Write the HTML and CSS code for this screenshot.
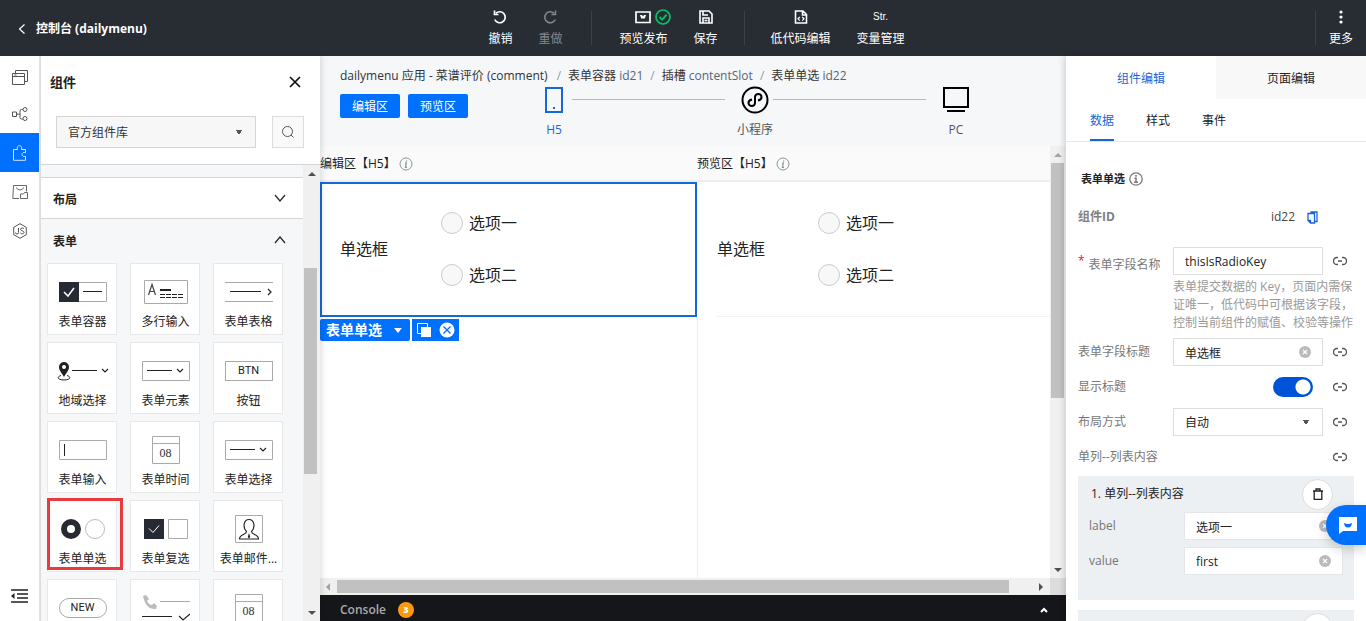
FILE: index.html
```html
<!DOCTYPE html>
<html lang="zh-CN">
<head>
<meta charset="utf-8">
<title>控制台 (dailymenu)</title>
<link rel="stylesheet" href="styles.css">
</head>
<body>
<svg class="defs" width="0" height="0" aria-hidden="true">
  <symbol id="link" viewBox="0 0 14 10"><path d="M5 1.500H4a3.500 3.500 0 0 0 0 7h1M9 1.500h1a3.500 3.500 0 0 1 0 7H9M5 5h4" fill="none" stroke="#555" stroke-width="1.300"/></symbol>
  <symbol id="clear" viewBox="0 0 12 12"><circle cx="6" cy="6" r="6" fill="#bbb"/><path d="M4 4l4 4M8 4L4 8" stroke="#fff" stroke-width="1.200"/></symbol>
  <symbol id="info" viewBox="0 0 14 14"><circle cx="7" cy="7" r="6" fill="none" stroke="currentColor"/><path d="M7.600 3.400v1.300M6 6.200h1.300L6.500 10.300H8" fill="none" stroke="currentColor" stroke-width="1.200"/></symbol>
  <symbol id="date" viewBox="0 0 28 28"><path d="M.5.500h27v27H.500zM.5 7.500h27" fill="#fff" stroke="#aaa"/></symbol>
  <symbol id="trash" viewBox="0 0 12 12"><path d="M1 3h10M4 3V1h4v2M2.200 3v8.300h7.600V3" fill="none" stroke="#222" stroke-width="1.300"/></symbol>
</svg>

<header class="topbar">
  <a class="brand" href="#"><svg width="8" height="12" viewBox="0 0 8 12"><path d="M6.500 1.500L1.500 6l5 4.500" fill="none" stroke="#fff" stroke-width="1.200"/></svg>控制台 (dailymenu)</a>
  <nav class="tools">
    <button class="tool"><span class="tool-icon"><svg width="16" height="16" viewBox="0 0 16 16"><path d="M4 4.200a5.500 5.500 0 1 1-1.300 6.300M2.500 1.500v4h4" fill="none" stroke="#fff" stroke-width="1.700"/></svg></span>撤销</button>
    <button class="tool disabled"><span class="tool-icon"><svg width="16" height="16" viewBox="0 0 16 16"><path d="M12 4.200a5.500 5.500 0 1 0 1.300 6.300M13.500 1.500v4h-4" fill="none" stroke="#85888c" stroke-width="1.500"/></svg></span>重做</button>
    <i class="divider first"></i>
    <button class="tool"><span class="tool-icon"><svg width="16" height="14" viewBox="0 0 16 14"><path d="M1 2h14v10.500H1z" fill="none" stroke="#fff" stroke-width="1.700"/><path d="M5 5h2l1 1.500L9 5h2L9.800 8.500H6.200z" fill="#fff"/></svg><svg class="badge" width="16" height="16" viewBox="0 0 16 16"><circle cx="8" cy="8" r="7" fill="none" stroke="#0abf6a" stroke-width="1.700"/><path d="M4.500 8l2.600 2.600L11.600 5.800" fill="none" stroke="#0abf6a" stroke-width="2"/></svg></span>预览发布</button>
    <button class="tool"><span class="tool-icon"><svg width="14" height="14" viewBox="0 0 14 14"><path d="M1 1h9l3 3v9H1zM4 13V8h6v5M4 1v4h5M5.500 10.500h3" fill="none" stroke="#fff" stroke-width="1.600"/></svg></span>保存</button>
    <i class="divider"></i>
    <button class="tool"><span class="tool-icon"><svg width="14" height="14" viewBox="0 0 14 14"><path d="M1.500 1h7.500l3.500 3.500V13h-11zM8.500 1v4h4" fill="none" stroke="#fff" stroke-width="1.600"/><path d="M5.800 7L4 8.800l1.800 1.800M8.200 7L10 8.800l-1.800 1.800" fill="none" stroke="#fff" stroke-width="1.200"/></svg></span>低代码编辑</button>
    <button class="tool"><span class="tool-icon str">Str.</span>变量管理</button>
  </nav>
  <div class="more"><i class="divider"></i><button class="tool"><span class="tool-icon"><svg width="4" height="14" viewBox="0 0 4 14"><circle cx="2" cy="2" r="1.600" fill="#fff"/><circle cx="2" cy="7" r="1.600" fill="#fff"/><circle cx="2" cy="12" r="1.600" fill="#fff"/></svg></span>更多</button></div>
</header>

<div class="workspace">
  <nav class="rail">
    <button class="rail-item" aria-label="页面"><svg width="16" height="16" viewBox="0 0 16 16"><path d="M.5 4.500h12v11H.500zM.5 7.500h12M3.500 4.500v-3h12v11h-3M2.500 6h2" fill="none" stroke="#555"/></svg></button>
    <button class="rail-item" aria-label="流程"><svg width="16" height="16" viewBox="0 0 16 16"><path d="M.5 6h4v4.500h-4zM4.500 8.200H8M11 3.500H9.500Q8 3.500 8 5v6.500Q8 13 9.500 13H11" fill="none" stroke="#555"/><circle cx="13" cy="3.500" r="2" fill="none" stroke="#555"/><circle cx="13" cy="12.500" r="2" fill="none" stroke="#555"/></svg></button>
    <button class="rail-item active" aria-label="组件"><svg width="16" height="16" viewBox="0 0 16 16"><path d="M1.500 4.500h4C4.500 2 6 .7 7.500.7S10.500 2 9.500 4.500h4v3.200c-2-.8-3.500.3-3.500 1.800s1.500 2.600 3.500 1.800v4h-12z" fill="none" stroke="#d4e7ff"/></svg></button>
    <button class="rail-item" aria-label="素材"><svg width="16" height="16" viewBox="0 0 16 16"><path d="M7 14.500H.8L1.500 1.500h13v6M4 3.500q4 5 8 0M8.500 10h3l1-1.500h3v6h-7z" fill="none" stroke="#666"/></svg></button>
    <button class="rail-item" aria-label="脚本"><svg width="16" height="16" viewBox="0 0 16 16"><path d="M8 .7l6.300 3.600v7.400L8 15.300l-6.300-3.600V4.300z" fill="none" stroke="#555"/><path d="M6.500 5v4.500q0 1.500-1.500 1.500t-1.500-1.500M12 6q-.5-1-1.800-1T8.500 6.300c0 2 3.500 1 3.500 3 0 1-.6 1.500-1.800 1.500s-1.700-.5-1.900-1.200" fill="none" stroke="#555"/></svg></button>
    <button class="rail-item bottom" aria-label="收起"><svg width="17" height="14" viewBox="0 0 17 14"><path d="M0 1h17M6 5h11M6 9h11M0 13h17" stroke="#222" stroke-width="1.500"/><path d="M3.500 4v6L0 7z" fill="#222"/></svg></button>
  </nav>

  <aside class="library">
    <div class="library-head"><h2>组件</h2><button class="plain" aria-label="关闭"><svg width="12" height="12" viewBox="0 0 12 12"><path d="M1 1l10 10M11 1L1 11" stroke="#111" stroke-width="1.700"/></svg></button></div>
    <div class="library-search">
      <select class="lib-select" aria-label="组件库"><option>官方组件库</option></select>
      <button class="search" aria-label="搜索"><svg width="14" height="14" viewBox="0 0 14 14"><circle cx="6.500" cy="6.500" r="5" fill="none" stroke="#555"/><path d="M10 10l2.500 2.500" stroke="#555"/></svg></button>
    </div>
    <div class="library-body">
      <div class="sections">
        <button class="section closed">布局<svg width="12" height="8" viewBox="0 0 12 8"><path d="M1 1l5 6 5-6" fill="none" stroke="#222" stroke-width="1.200"/></svg></button>
        <button class="section">表单<svg width="12" height="8" viewBox="0 0 12 8"><path d="M1 7l5-6 5 6" fill="none" stroke="#222" stroke-width="1.200"/></svg></button>
        <div class="cards">
          <button class="card"><span class="pic"><svg width="48" height="20" viewBox="0 0 48 20"><path d="M.5.500h47v19H.500z" fill="#fff" stroke="#aaa"/><path d="M0 0h20v20H0z" fill="#262b33"/><path d="M5 10l4 4 6-8" fill="none" stroke="#fff" stroke-width="1.500"/><path d="M24 9.500h19" stroke="#222"/></svg></span>表单容器</button>
          <button class="card"><span class="pic"><svg width="44" height="24" viewBox="0 0 44 24"><path d="M.5.500h43v23H.500z" fill="#fff" stroke="#aaa"/><path d="M4.500 15L8 4.500 11.500 15M5.500 11.500h5" fill="none" stroke="#444" stroke-width="1.200"/><path d="M16 10h11" stroke="#222" stroke-width="2"/><path d="M16 14.500h23" stroke="#222" stroke-dasharray="5 1"/><path d="M16 17.500h23" stroke="#222" stroke-dasharray="5 1"/></svg></span>多行输入</button>
          <button class="card"><span class="pic"><svg width="48" height="20" viewBox="0 0 48 20"><path d="M0 .5h48M0 19.500h48" stroke="#aaa"/><path d="M5 9.500h31" stroke="#222"/><path d="M43 7l3 3-3 3" fill="none" stroke="#222" stroke-width="1.200"/></svg></span>表单表格</button>
          <button class="card"><span class="pic"><svg width="52" height="20" viewBox="0 0 52 20"><path d="M7 16C4 11 2 9 2 6a5 5 0 0 1 10 0c0 3-2 5-5 10z" fill="#222"/><circle cx="7" cy="6" r="2" fill="#fff"/><path d="M4 14.500c-5 1.500-3 4.500 3 4.500s8-3 3-4.500" fill="none" stroke="#222"/><path d="M15 9.500h25" stroke="#222"/><path d="M45 8l3 3 3-3" fill="none" stroke="#222" stroke-width="1.200"/></svg></span>地域选择</button>
          <button class="card"><span class="pic"><svg width="48" height="20" viewBox="0 0 48 20"><path d="M.5.500h47v19H.500z" fill="#fff" stroke="#aaa"/><path d="M5 9.500h25" stroke="#222"/><path d="M35 8l3 3 3-3" fill="none" stroke="#222" stroke-width="1.200"/></svg></span>表单元素</button>
          <button class="card"><span class="pic"><span class="btn-pic">BTN</span></span>按钮</button>
          <button class="card"><span class="pic"><svg width="48" height="20" viewBox="0 0 48 20"><path d="M.5.500h47v19H.500z" fill="#fff" stroke="#aaa"/><path d="M5.500 4v12" stroke="#222"/></svg></span>表单输入</button>
          <button class="card"><span class="pic"><span class="date-pic"><svg width="28" height="28"><use href="#date"/></svg><span>08</span></span></span>表单时间</button>
          <button class="card"><span class="pic"><svg width="48" height="20" viewBox="0 0 48 20"><path d="M.5.500h47v19H.500z" fill="#fff" stroke="#aaa"/><path d="M5 9.500h25" stroke="#222"/><path d="M35 8l3 3 3-3" fill="none" stroke="#222" stroke-width="1.200"/></svg></span>表单选择</button>
          <button class="card marked"><span class="pic"><svg width="44" height="20" viewBox="0 0 44 20"><circle cx="10" cy="10" r="7" fill="#fff" stroke="#262b33" stroke-width="6"/><circle cx="34" cy="10" r="9.500" fill="#fff" stroke="#bbb"/></svg></span>表单单选</button>
          <button class="card"><span class="pic"><svg width="44" height="20" viewBox="0 0 44 20"><path d="M0 0h20v20H0z" fill="#262b33"/><path d="M5 9.500l4 4 6-7" fill="none" stroke="#fff"/><path d="M24.500.500h19v19h-19z" fill="#fff" stroke="#aaa"/></svg></span>表单复选</button>
          <button class="card"><span class="pic"><svg width="28" height="28" viewBox="0 0 28 28"><path d="M.5.500h27v27H.500z" fill="#fff" stroke="#aaa"/><path d="M4.500 24c0-5 7-4 7-7.500-4-4-3-12 2.500-12s6.500 8 2.500 12c0 3.500 7 2.500 7 7.500z" fill="none" stroke="#222" stroke-width="1.200"/><path d="M14 18l1.200 4-1.200 1.500-1.200-1.500z" fill="#222"/></svg></span>表单邮件...</button>
          <button class="card"><span class="pic"><span class="btn-pic pill">NEW</span></span></button>
          <button class="card"><span class="pic"><svg width="48" height="26" viewBox="0 0 48 26"><path d="M1 1l3-1 3 4-2 2q2 4 5 4l2-2 3 3-1 3Q4 15 1 1z" fill="#bbb"/><path d="M18 6.500h30" stroke="#aaa"/><path d="M0 21.500h30" stroke="#222"/><path d="M37 21l4 4 7-6" fill="none" stroke="#222" stroke-width="1.200"/></svg></span></button>
          <button class="card"><span class="pic"><span class="date-pic"><svg width="28" height="28"><use href="#date"/></svg><span>08</span></span></span></button>
        </div>
      </div>
      <div class="vbar lib-bar"><i class="arrow up"></i><div class="track"><i class="thumb"></i></div><i class="arrow down"></i></div>
    </div>
  </aside>

  <main class="stage">
    <div class="stage-head">
      <nav class="crumbs"><span>dailymenu 应用 - 菜谱评价 (comment)</span><i>/</i><span>表单容器 <em>id21</em></span><i>/</i><span>插槽 <em>contentSlot</em></span><i>/</i><span>表单单选 <em>id22</em></span></nav>
      <div class="platforms">
        <button class="primary">编辑区</button><button class="primary">预览区</button>
        <div class="steps">
          <button class="step current"><span class="step-icon"><svg width="18" height="26" viewBox="0 0 18 26"><path d="M1 1h16v24H1z" fill="none" stroke="#1766d9" stroke-width="2"/><path d="M8 20h2v2H8z" fill="#1766d9"/></svg></span>H5</button>
          <i class="line"></i>
          <button class="step"><span class="step-icon"><svg width="28" height="28" viewBox="0 0 28 28"><circle cx="14" cy="14" r="12.500" fill="none" stroke="#000" stroke-width="2"/><path d="M17 14.500c2.500-.5 3.500-1.700 3.500-3.500 0-1.700-1.500-3-3.200-3S14 9.300 14 11v6c0 1.700-1.500 3-3.200 3s-3.300-1.300-3.300-3c0-1.800 1-3 3.500-3.500" fill="none" stroke="#000" stroke-width="2"/></svg></span>小程序</button>
          <i class="line"></i>
          <button class="step"><span class="step-icon"><svg width="26" height="26" viewBox="0 0 26 26"><path d="M1 1h24v19H1z" fill="none" stroke="#000" stroke-width="2"/><path d="M4 24h18" stroke="#000" stroke-width="2"/></svg></span>PC</button>
        </div>
      </div>
    </div>
    <div class="canvas">
      <div class="view">
        <div class="panes">
          <section class="pane">
            <h3>编辑区【H5】<svg width="14" height="14"><use href="#info"/></svg></h3>
            <div class="field selected">
              <span class="field-name">单选框</span>
              <div class="options"><label><input type="radio" name="edit">选项一</label><label><input type="radio" name="edit">选项二</label></div>
            </div>
            <div class="tags"><button class="tag name">表单单选<i class="caret"></i></button><div class="tag acts"><button aria-label="复制"><svg width="15" height="15" viewBox="0 0 15 15"><path d="M4 10.500H.500V.500h10V4" fill="none" stroke="#fff"/><path d="M4 4h10v10H4z" fill="#fff"/></svg></button><button aria-label="删除"><svg width="16" height="16" viewBox="0 0 16 16"><circle cx="8" cy="8" r="7.500" fill="#fff"/><path d="M4.500 4.500l7 7M11.500 4.500l-7 7" stroke="#0070ff" stroke-width="1.300"/></svg></button></div></div>
          </section>
          <section class="pane preview">
            <h3>预览区【H5】<svg width="14" height="14"><use href="#info"/></svg></h3>
            <div class="field">
              <span class="field-name">单选框</span>
              <div class="options"><label><input type="radio" name="view">选项一</label><label><input type="radio" name="view">选项二</label></div>
            </div>
          </section>
        </div>
      </div>
      <div class="vbar"><i class="arrow up pale"></i><div class="track"><i class="thumb tall"></i></div><i class="arrow down"></i></div>
      <div class="hbar"><i class="arrow left pale"></i><div class="track"><i class="thumb"></i></div><i class="arrow right"></i></div>
      <i class="corner"></i>
    </div>
    <button class="console"><span>Console</span><b>3</b><svg width="8" height="6" viewBox="0 0 8 6"><path d="M1 5l3-3 3 3" fill="none" stroke="#fff" stroke-width="2"/></svg></button>
  </main>

  <aside class="props">
    <div class="tabs"><button class="on">组件编辑</button><button>页面编辑</button></div>
    <div class="subtabs"><button class="on">数据</button><button>样式</button><button>事件</button></div>
    <form class="form">
      <h4>表单单选<svg width="14" height="14" viewBox="0 0 14 14"><circle cx="7" cy="7" r="6.200" fill="none" stroke="#777" stroke-width="1.300"/><path d="M7 3v1.700M5.500 6.200H7v4M5 10.300h4" fill="none" stroke="#777" stroke-width="1.500"/></svg></h4>
      <div class="row id-row"><strong>组件ID</strong><span>id22</span><button type="button" class="plain" aria-label="复制"><svg width="11" height="13" viewBox="0 0 11 13"><path d="M3.500 1h6.500v9.500H7.500M1 2.500h6.500V12H3.500L1 9.500zM3.500 12V9.500H1" fill="none" stroke="#1766d9" stroke-width="1.300"/></svg></button></div>
      <div class="row key-row"><label for="k"><b>*</b>表单字段名称</label><input class="text" id="k" value="thisIsRadioKey"><svg class="link" width="14" height="10"><use href="#link"/></svg></div>
      <p class="help">表单提交数据的 Key，页面内需保证唯一，低代码中可根据该字段，控制当前组件的赋值、校验等操作</p>
      <div class="row"><label for="t">表单字段标题</label><div class="clearable"><input class="text" id="t" value="单选框"><svg width="12" height="12"><use href="#clear"/></svg></div><svg class="link" width="14" height="10"><use href="#link"/></svg></div>
      <div class="row"><label for="s">显示标题</label><input class="switch" type="checkbox" id="s" checked><svg class="link" width="14" height="10"><use href="#link"/></svg></div>
      <div class="row"><label for="m">布局方式</label><select class="text" id="m"><option>自动</option></select><svg class="link" width="14" height="10"><use href="#link"/></svg></div>
      <div class="row"><span class="row-label">单列--列表内容</span><svg class="link" width="14" height="10"><use href="#link"/></svg></div>
      <fieldset class="group">
        <div class="group-head"><span>1. 单列--列表内容</span><button type="button" class="round" aria-label="删除"><svg width="12" height="12"><use href="#trash"/></svg></button></div>
        <div class="pair"><label for="l1">label</label><div class="clearable"><input class="text" id="l1" value="选项一"><svg width="12" height="12"><use href="#clear"/></svg></div></div>
        <div class="pair"><label for="v1">value</label><div class="clearable"><input class="text" id="v1" value="first"><svg width="12" height="12"><use href="#clear"/></svg></div></div>
      </fieldset>
      <fieldset class="group">
        <div class="group-head"><button type="button" class="round" aria-label="删除"><svg width="12" height="12"><use href="#trash"/></svg></button></div>
      </fieldset>
    </form>
  </aside>
</div>
<button class="chat" aria-label="客服"><svg width="18" height="17" viewBox="0 0 18 17"><path d="M0 0h18v14H4l-4 3z" fill="#fff"/><path d="M5 6q4 2 8 0-.5 4.500-4 4.500T5 6z" fill="#0070ff"/></svg></button>
</body>
</html>
```
FILE: styles.css
```css
*, *::before, *::after { box-sizing: border-box; }
body {
  margin: 0;
  height: 100vh;
  display: flex;
  flex-direction: column;
  overflow: hidden;
  font: 12px/18px "Open Sans", "Noto Sans CJK SC", sans-serif;
  color: #222;
  background: #fff;
}
button, input, select { font: inherit; color: inherit; margin: 0; }
button { padding: 0; border: 0; background: none; }
svg { display: block; flex: none; }
.defs { position: absolute; }
h2, h3, h4, p { margin: 0; }

.topbar {
  flex: none;
  height: 56px;
  display: flex;
  align-items: center;
  background: #282c33;
  color: #fff;
}
.brand {
  flex: 1;
  display: flex;
  align-items: center;
  gap: 10px;
  padding: 2px 0 0 18px;
  color: #fff;
  font-weight: 700;
  text-decoration: none;
}
.tools { display: flex; align-items: center; gap: 26px; padding-left: 22px; }
.tool { display: flex; flex-direction: column; align-items: center; gap: 4px; white-space: nowrap; }
.tool-icon { position: relative; height: 18px; display: flex; align-items: center; }
.badge { position: absolute; left: 20px; top: 1px; }
.str { font: 10px/18px "Liberation Sans", sans-serif; }
.disabled { color: #85888c; }
.divider { width: 1px; height: 34px; background: #3c4148; }
.divider.first { margin: 0 1px 0 3px; }
.more { flex: 1; display: flex; justify-content: flex-end; align-items: center; gap: 13px; padding-right: 13px; }

.workspace { flex: 1; min-height: 0; display: flex; }

.rail { flex: none; width: 40px; display: flex; flex-direction: column; border-right: 1px solid #e8e8e8; }
.rail-item { height: 39px; display: grid; place-items: center; }
.rail-item:first-child { height: 38px; padding-top: 4px; }
.rail-item.active { background: #0070ff; }
.rail-item.bottom { margin-top: auto; margin-bottom: 6px; }

.library {
  flex: none;
  width: 280px;
  display: flex;
  flex-direction: column;
  border-left: 1px solid #ddd;
  box-shadow: 2px 0 6px rgba(0, 0, 0, .12);
  z-index: 1;
}
.library-head { display: flex; justify-content: space-between; align-items: center; padding: 16px 19px 16px 9px; }
.library-head h2 { font-size: 13px; line-height: 20px; }
.library-search { display: flex; gap: 16px; padding: 8px 16px 16px 15px; }
.lib-select, select.text {
  appearance: none;
  border: 1px solid #ddd;
  border-radius: 0;
  background-color: #fff;
  background-image: linear-gradient(to bottom right, #555 50%, transparent 51%), linear-gradient(to bottom left, #555 50%, transparent 51%);
  background-repeat: no-repeat;
  background-position: right 13px center, right 16px center;
  background-size: 3px 5px;
}
.lib-select { flex: 1; height: 32px; padding: 2px 11px 0; border-color: #d5d5d5; background-color: #f7f7f7; color: #333; }
.search { width: 32px; height: 32px; display: grid; place-items: center; border: 1px solid #ddd; background: #f9f9f9; }
.library-body { flex: 1; min-height: 0; display: flex; border-top: 1px solid #d5d5d5; background: #f6f7f9; }
.sections { flex: 1; padding-top: 12px; overflow: hidden; }
.section {
  width: 100%;
  height: 44px;
  display: flex;
  align-items: center;
  justify-content: space-between;
  padding: 1px 17px 0 12px;
  font-weight: 700;
}
.section.closed { height: 42px; padding-top: 4px; background: #fff; border: solid #d5d5d5; border-width: 1px 0; }
.section svg { margin-bottom: 4px; }
.cards { display: grid; grid-template-columns: repeat(3, 70px); gap: 7px 13px; padding: 0 6px; }
.card {
  position: relative;
  height: 72px;
  display: flex;
  flex-direction: column;
  align-items: center;
  padding-left: 1px;
  border: 1px solid #e8e8e8;
  background: #fff;
  white-space: nowrap;
}
.marked::after {
  content: "";
  position: absolute;
  top: -3px;
  left: -1px;
  width: 76px;
  height: 72px;
  border: 3px solid #e83a3f;
}
.pic { height: 49px; padding-top: 6px; display: grid; place-items: center; }
.btn-pic { width: 48px; height: 20px; border: 1px solid #aaa; font: 11px/18px Roboto, sans-serif; }
.pill { border-radius: 10px; }
.date-pic { display: grid; place-items: center; }
.date-pic > * { grid-area: 1 / 1; }
.date-pic span { padding-top: 6px; font: 12px/18px "Liberation Serif", serif; color: #333; }

.vbar { flex: none; width: 16px; display: flex; flex-direction: column; align-items: center; padding: 7px 0 6px; background: #f0f0f0; }
.vbar .track { flex: 1; width: 100%; padding: 6px 2px 0 1px; min-height: 0; }
.thumb { display: block; background: #c1c1c1; }
.vbar .thumb { height: 60%; }
.vbar .tall { height: 58%; }
.lib-bar { width: 17px; }
.lib-bar .track { padding: 92px 3px 0 1px; }
.arrow { border: 4px solid transparent; }
.up { border-top: 0; border-bottom-color: #505050; }
.down { border-bottom: 0; border-top-color: #505050; }
.left { border-left: 0; border-right-color: #505050; }
.right { border-right: 0; border-left-color: #505050; }
.up.pale { border-bottom-color: #a3a3a3; }
.left.pale { border-right-color: #a3a3a3; }

.stage { flex: 1; min-width: 0; display: flex; flex-direction: column; }
.stage-head { height: 90px; padding: 11px 20px 0; background: #f6f7f9; }
.crumbs { display: flex; gap: 7px; color: #333; white-space: nowrap; }
.crumbs i { color: #999; font-style: normal; }
.crumbs i:first-of-type { margin-left: 2px; }
.crumbs em { font-style: normal; color: #567; }
.platforms { display: flex; gap: 8px; }
.primary { width: 60px; height: 24px; margin-top: 9px; padding-top: 2px; border-radius: 2px; background: #0070ff; color: #fff; }
.steps { flex: 1; display: flex; margin: 0 72px 0 60px; }
.step { width: 36px; display: flex; flex-direction: column; align-items: center; gap: 6px; color: #555; white-space: nowrap; }
.step.current { color: #1766d9; }
.step-icon { height: 30px; display: grid; place-items: center; }
.line { flex: 1; height: 1px; margin: 14px 12px 0 0; background: #b5b8ba; }

.canvas { flex: 1; min-height: 0; display: grid; grid-template: minmax(0, 1fr) 17px / minmax(0, 1fr) 16px; }
.view { overflow: hidden; }
.panes { width: calc(100% + 24px); height: 100%; display: grid; grid-template-columns: 1fr 1fr; }
.pane { display: flex; flex-direction: column; }
.pane h3 {
  height: 36px;
  display: flex;
  align-items: center;
  gap: 3px;
  padding-top: 2px;
  border-bottom: 2px solid #eee;
  background: #fafafa;
  font-size: 12px;
  font-weight: 400;
}
.pane h3 svg { color: #899; }
.field { height: 135px; display: grid; grid-template-columns: 101px 1fr; align-items: center; margin-left: 20px; border-bottom: 1px solid #f2f2f2; font-size: 16px; line-height: 24px; }
.field.selected { margin: 0; padding: 0 0 1px 18px; border: 2px solid #1269d8; }
.options { display: grid; gap: 28px; }
.options label { display: flex; align-items: center; gap: 6px; }
.options input { appearance: none; width: 22px; height: 22px; border: 1px solid #ccc; border-radius: 50%; background: #f8f8f8; }
.preview::after { content: ""; flex: 1; border-left: 1px solid #eee; }
.tags { display: flex; gap: 2px; padding-top: 2px; }
.tag { height: 22px; display: flex; align-items: center; background: #0070ff; color: #fff; }
.name { gap: 12px; padding: 0 8px 0 6px; border-radius: 2px; font-size: 14px; font-weight: 700; }
.caret { border: 4px solid transparent; border-top: 5px solid #fff; border-bottom: 0; }
.acts { gap: 7px; padding: 0 4px 0 5px; }

.hbar { display: flex; align-items: center; padding: 0 7px 0 6px; background: #f0f0f0; }
.hbar .track { flex: 1; padding: 1px 30px 1px 7px; height: 15px; }
.hbar .thumb { height: 13px; }
.corner { background: #ddd; }
.console { height: 26px; display: flex; align-items: center; gap: 12px; padding: 4px 18px 0 20px; background: #141619; color: #aaa; font-size: 12px; font-weight: 600; }
.console b { width: 16px; height: 16px; border-radius: 50%; background: #ff9811; color: #fff; font-size: 9px; line-height: 16px; text-align: center; }
.console svg { margin-left: auto; }

.props { flex: none; width: 300px; overflow: hidden; background: #fff; box-shadow: -2px 0 6px rgba(0, 0, 0, .15); z-index: 1; }
.tabs { display: grid; grid-template-columns: 1fr 1fr; }
.tabs button { height: 43px; padding-top: 2px; background: #f8f8f9; }
.tabs .on { background: #fff; color: #1766d9; }
.subtabs { display: flex; gap: 32px; padding: 0 24px; border-bottom: 1px solid #e8e8e8; }
.subtabs button { height: 42px; padding-top: 3px; border-bottom: 2px solid transparent; }
.subtabs .on { color: #1766d9; border-color: #1766d9; }
.form { padding: 27px 12px 0; }
.form h4 { display: flex; align-items: center; gap: 4px; padding-left: 3px; font-size: 11px; line-height: 20px; }
.row { min-height: 28px; display: flex; align-items: center; justify-content: space-between; margin-bottom: 7px; color: #777; }
.row > label, .row-label { flex: 1; }
.row > .text, .row > .clearable { flex: none; width: 150px; }
.link { margin: 0 7px 0 10px; }
.id-row { margin: 14px 0 16px; color: #444; }
.id-row strong { flex: 1; color: #808080; }
.id-row .plain { margin: 0 36px 0 12px; }
.key-row { margin-bottom: 3px; }
.key-row label { padding-top: 3px; }
.key-row b { padding-right: 4px; color: #e02020; vertical-align: 4px; font-weight: 400; }
.text { width: 100%; height: 28px; padding: 1px 11px 0; border: 1px solid #ddd; border-radius: 0; background-color: #fff; color: #222; }
.help { margin: 0 0 6px 95px; color: #999; }
.clearable { display: grid; align-items: center; }
.clearable > * { grid-area: 1 / 1; }
.clearable svg { justify-self: end; margin-right: 12px; }
.switch { appearance: none; width: 40px; height: 20px; margin-right: 10px; border-radius: 10px; background: radial-gradient(circle at 30px 10px, #fff 7px, #0052d9 8px); }
.group { min-width: 0; height: 124px; margin: 0 0 10px; padding: 3px 11px 0; border: 0; background: #edf0f2; }
.form .row + .group { margin-top: -2px; }
.group-head { height: 30px; display: flex; align-items: center; justify-content: space-between; padding: 0 10px 0 2px; margin-bottom: 3px; }
.round { width: 31px; height: 31px; display: grid; place-items: center; flex: none; margin-left: auto; border: 1px solid #ddd; border-radius: 50%; background: #fff; }
.pair { display: grid; grid-template-columns: 95px 1fr; align-items: center; margin-bottom: 7px; color: #777; }
.pair .text { border-color: #e4e7e9; }

.chat {
  position: fixed;
  right: 0;
  bottom: 76px;
  width: 40px;
  height: 40px;
  display: grid;
  place-items: center;
  padding-left: 4px;
  border-radius: 20px 0 0 20px;
  background: #0070ff;
  box-shadow: 0 4px 12px rgba(0, 0, 0, .2);
  z-index: 2;
}
```
